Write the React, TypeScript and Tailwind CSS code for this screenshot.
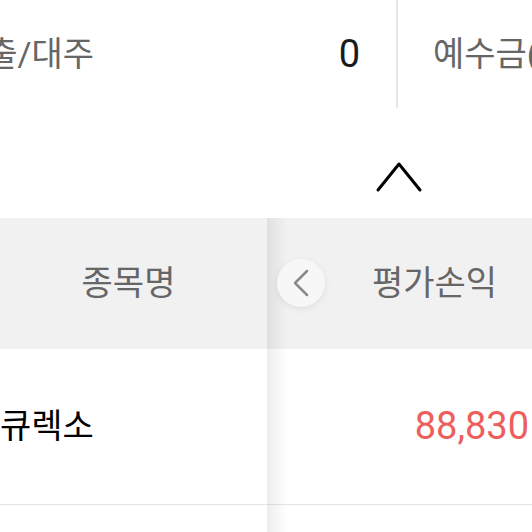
import React from "react";

const font = "font-['Roboto','Noto_Sans_CJK_KR',sans-serif]";

function ChevronUp() {
  return (
    <svg width="48" height="32" viewBox="0 0 48 32" fill="none">
      <path d="M3 29 L24 3 L45 29" stroke="#000" strokeWidth="3" strokeLinecap="round" strokeLinejoin="round" />
    </svg>
  );
}

function ChevronLeft() {
  return (
    <svg width="18" height="28" viewBox="0 0 18 28" fill="none">
      <path d="M15 2 L3 14 L15 26" stroke="#8a8a8a" strokeWidth="2.5" strokeLinecap="round" strokeLinejoin="round" />
    </svg>
  );
}

export default function App() {
  return (
    <div className={`w-[532px] h-[532px] overflow-hidden bg-white ${font}`}>
      {/* summary row */}
      <div className="flex h-[108px]">
        <div className="w-[398px] shrink-0 flex items-center justify-between border-r-2 border-[#e6e6e6] pr-[36px] overflow-hidden">
          <span className="text-[34px] text-[#666] whitespace-nowrap -ml-[45px]">대출/대주</span>
          <span className="text-[38px] text-[#1a1a1a]">0</span>
        </div>
        <div className="flex items-center pl-[35px] overflow-hidden">
          <span className="text-[34px] text-[#666] whitespace-nowrap">예수금(원)</span>
        </div>
      </div>

      {/* collapse toggle */}
      <div className="h-[110px] flex justify-end pr-[109px] pt-[53px]">
        <ChevronUp />
      </div>

      {/* table */}
      <div className="flex">
        <div className="w-[267px] shrink-0">
          <div className="h-[131px] bg-[#f1f1f1] flex items-center justify-center">
            <span className="text-[34px] text-[#666] mr-[10px]">종목명</span>
          </div>
          <div className="h-[156px] flex items-center border-b border-[#e4e4e4]">
            <span className="text-[34px] text-black whitespace-nowrap">큐렉소</span>
          </div>
          <div className="h-[60px]" />
        </div>
        <div className="relative flex-1 overflow-hidden">
          <div className="absolute inset-y-0 left-0 w-[20px] bg-gradient-to-r from-[rgba(0,0,0,0.07)] to-transparent z-10" />
          <div className="h-[131px] bg-[#f1f1f1] flex items-center pl-[105px] relative">
            <div className="absolute left-[10px] top-[41px] w-[48px] h-[48px] rounded-full bg-[#f7f7f7] shadow-[0_2px_6px_rgba(0,0,0,0.08)] flex items-center justify-center z-20">
              <ChevronLeft />
            </div>
            <span className="text-[34px] text-[#666] whitespace-nowrap">평가손익</span>
          </div>
          <div className="h-[156px] flex items-center justify-end pr-[3px] border-b border-[#e4e4e4]">
            <span className="text-[38px] text-[#ec5f5c] whitespace-nowrap">88,830</span>
          </div>
          <div className="h-[60px]" />
        </div>
      </div>
    </div>
  );
}
